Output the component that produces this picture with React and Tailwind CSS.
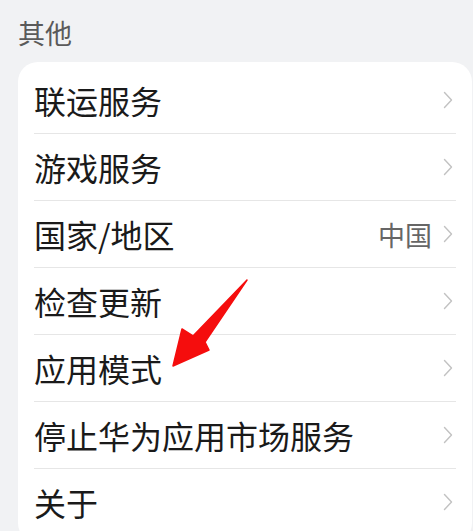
const items = [
  { label: "联运服务" },
  { label: "游戏服务" },
  { label: "国家/地区", value: "中国" },
  { label: "检查更新" },
  { label: "应用模式" },
  { label: "停止华为应用市场服务" },
  { label: "关于" },
];

const Chevron = () => (
  <svg width="10" height="18" viewBox="0 0 10 18" fill="none" className="shrink-0">
    <path d="M1.5 1.5 L8.5 9 L1.5 16.5" stroke="#c2c2c2" strokeWidth="1.4" strokeLinecap="round" strokeLinejoin="round" />
  </svg>
);

export default function App() {
  return (
    <div
      className="relative min-h-[531px] w-full overflow-hidden bg-[#f1f2f4] pl-[18px] pr-px"
      style={{ fontFamily: '"Noto Sans CJK SC", "Noto Sans", sans-serif' }}
    >
      {/* Section title */}
      <div className="pt-4 mb-3 text-[27px] leading-[34px] text-[#5a5a5a]">其他</div>

      {/* Settings card */}
      <div className="rounded-[20px] bg-white pt-1 pb-2">
        <div className="mx-4">
          {items.map((item, i) => (
            <div
              key={item.label}
              className={`flex h-[67px] items-center justify-between ${i > 0 ? "border-t border-[#e6e6e6]" : ""}`}
            >
              <span className="text-[32px] leading-none text-[#1a1a1a]">{item.label}</span>
              <div className="flex items-center gap-[11px] pr-[3px]">
                {item.value && <span className="text-[27px] leading-none text-[#666666]">{item.value}</span>}
                <Chevron />
              </div>
            </div>
          ))}
        </div>
      </div>

      {/* Red annotation arrow */}
      <svg className="pointer-events-none absolute left-0 top-0" width="473" height="531" viewBox="0 0 473 531">
        <polygon
          points="247,280 205,342 209,350 173,366 182,329 193,336"
          fill="#f50d0d"
          stroke="#f50d0d"
          strokeWidth="1.5"
          strokeLinejoin="round"
        />
      </svg>
    </div>
  );
}
